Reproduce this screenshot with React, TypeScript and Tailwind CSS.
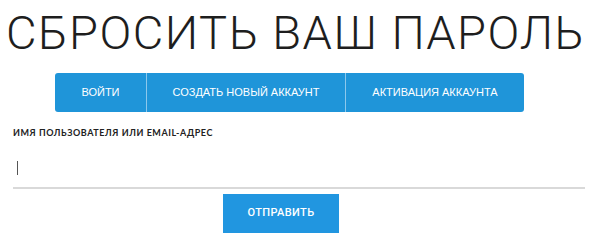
export default function App() {
  return (
    <div className="w-[600px] h-[243px] bg-white overflow-hidden font-['Liberation_Sans',Arial,sans-serif]">
      <h1 className="pl-[6px] pt-[7px] text-[47px] leading-[52px] font-light text-[#1e1e1e] tracking-[1.5px] font-['Roboto',sans-serif]">
        СБРОСИТЬ ВАШ ПАРОЛЬ
      </h1>
      <div className="mt-[14px] ml-[55px] w-[469px] h-[39px] flex rounded-[3px] overflow-hidden bg-[#1f95d9] text-white text-[11px] uppercase">
        <a className="w-[92px] flex items-center justify-center border-r border-[#8cc8ec]">Войти</a>
        <a className="w-[199px] flex items-center justify-center border-r border-[#8cc8ec]">Создать новый аккаунт</a>
        <a className="flex-1 flex items-center justify-center">Активация аккаунта</a>
      </div>
      <form className="px-[13px] pr-[15px]">
        <label className="block mt-[15px] text-[9px] leading-[12px] font-bold tracking-[0.55px] text-[#222] font-['Lato',sans-serif]">
          ИМЯ ПОЛЬЗОВАТЕЛЯ ИЛИ EMAIL-АДРЕС
        </label>
        <div className="mt-[22px] h-[28px] border-b-2 border-[#d9d9d9] flex items-start pl-[4px]">
          <span className="w-px h-[14px] bg-[#555]" />
        </div>
        <div className="flex pl-[210px] mt-[5px]">
          <button type="button" className="w-[116px] h-[39px] bg-[#2196e0] text-white text-[11px] font-medium tracking-[0.4px] font-['Roboto',sans-serif]">
            ОТПРАВИТЬ
          </button>
        </div>
      </form>
    </div>
  );
}
